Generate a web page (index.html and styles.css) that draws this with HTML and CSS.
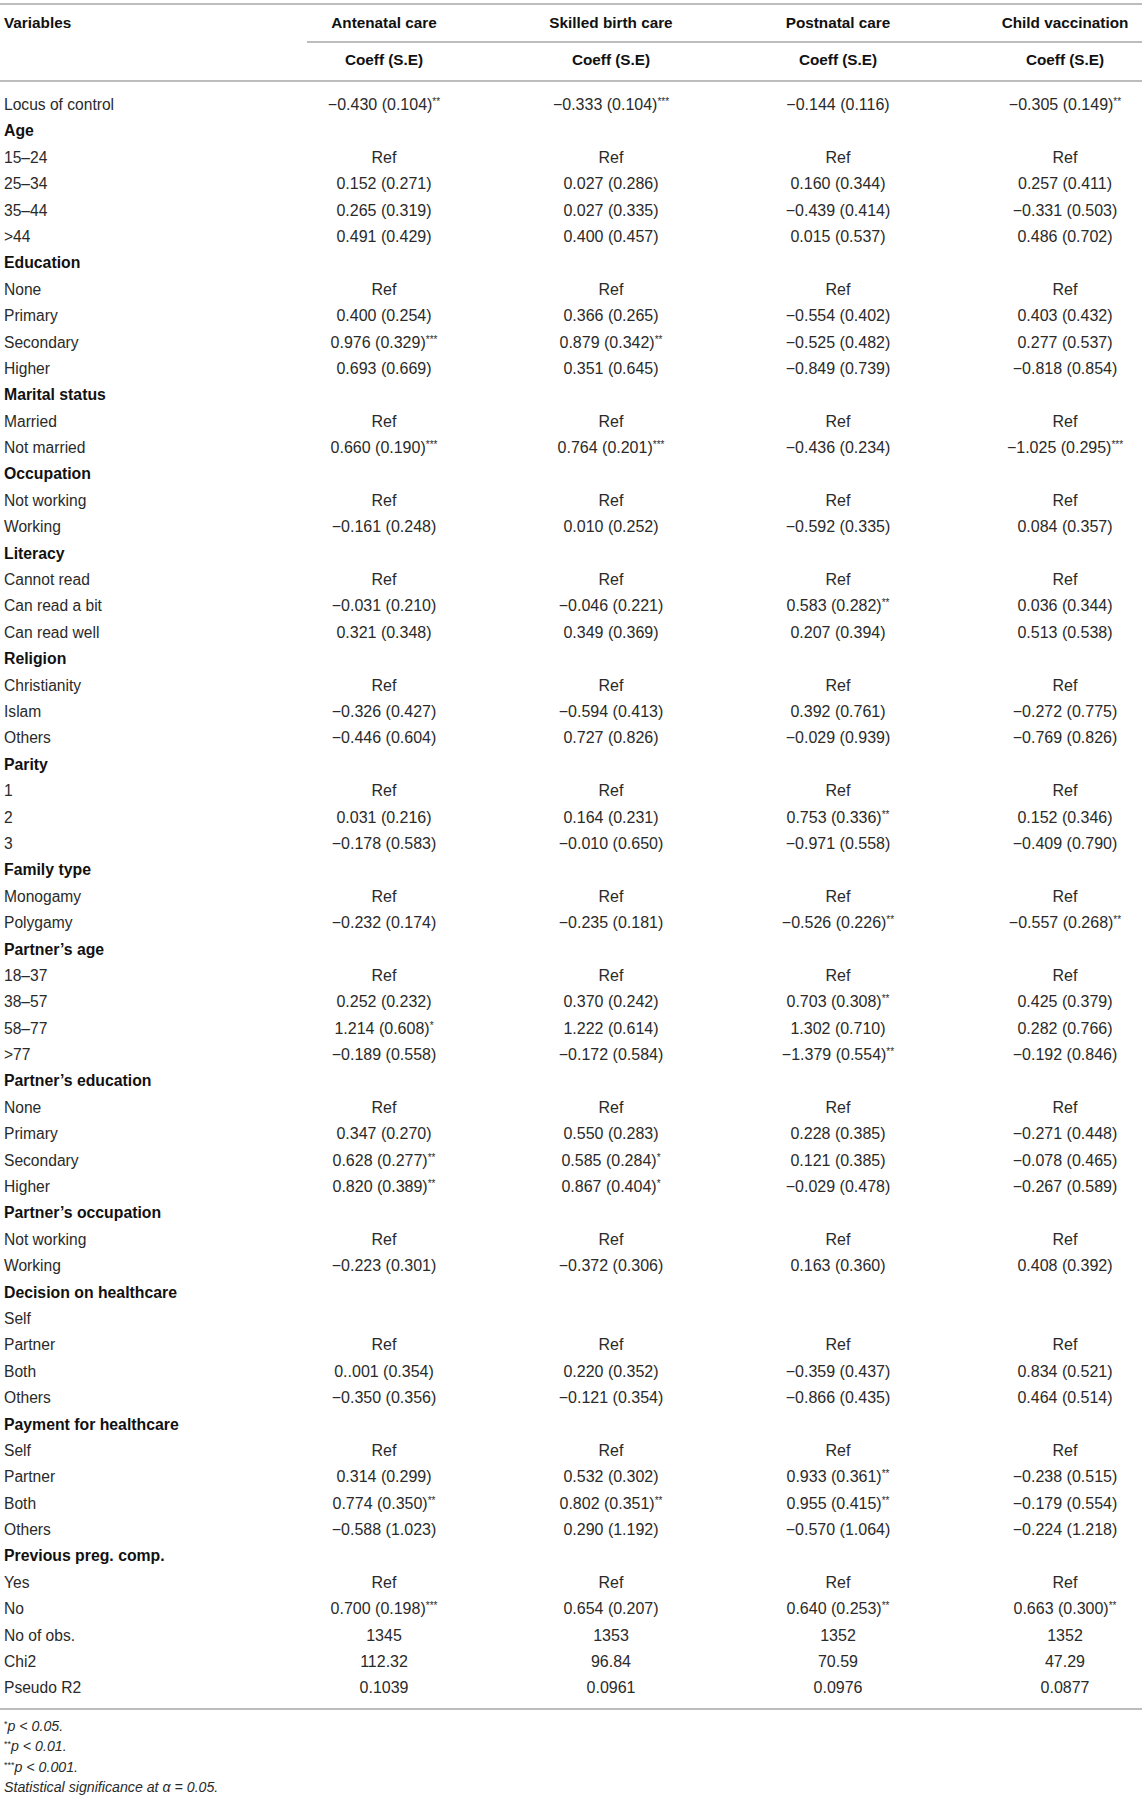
FILE: index.html
```html
<!DOCTYPE html>
<html>
<head>
    <meta name="viewport" content="width=device-width, initial-scale=1.0">
    <link rel="stylesheet" href="styles.css">
</head>
<body>

    <div class="tabla">
        <div class="cab">
            <div class="fila cab1">
                <div class="var">Variables</div>
                <div class="c">Antenatal care</div>
                <div class="c">Skilled birth care</div>
                <div class="c">Postnatal care</div>
                <div class="c">Child vaccination</div>
            </div>
            <div class="regla"></div>
            <div class="fila cab2">
                <div class="var"></div>
                <div class="c">Coeff (S.E)</div>
                <div class="c">Coeff (S.E)</div>
                <div class="c">Coeff (S.E)</div>
                <div class="c">Coeff (S.E)</div>
            </div>
        </div>

        <div class="cuerpo">
            <div class="fila"><div class="var">Locus of control</div><div class="c">&minus;0.430 (0.104)<sup>**</sup></div><div class="c">&minus;0.333 (0.104)<sup>***</sup></div><div class="c">&minus;0.144 (0.116)</div><div class="c">&minus;0.305 (0.149)<sup>**</sup></div></div>

            <div class="fila sec"><div class="var">Age</div></div>
            <div class="fila"><div class="var">15–24</div><div class="c">Ref</div><div class="c">Ref</div><div class="c">Ref</div><div class="c">Ref</div></div>
            <div class="fila"><div class="var">25–34</div><div class="c">0.152 (0.271)</div><div class="c">0.027 (0.286)</div><div class="c">0.160 (0.344)</div><div class="c">0.257 (0.411)</div></div>
            <div class="fila"><div class="var">35–44</div><div class="c">0.265 (0.319)</div><div class="c">0.027 (0.335)</div><div class="c">&minus;0.439 (0.414)</div><div class="c">&minus;0.331 (0.503)</div></div>
            <div class="fila"><div class="var">&gt;44</div><div class="c">0.491 (0.429)</div><div class="c">0.400 (0.457)</div><div class="c">0.015 (0.537)</div><div class="c">0.486 (0.702)</div></div>

            <div class="fila sec"><div class="var">Education</div></div>
            <div class="fila"><div class="var">None</div><div class="c">Ref</div><div class="c">Ref</div><div class="c">Ref</div><div class="c">Ref</div></div>
            <div class="fila"><div class="var">Primary</div><div class="c">0.400 (0.254)</div><div class="c">0.366 (0.265)</div><div class="c">&minus;0.554 (0.402)</div><div class="c">0.403 (0.432)</div></div>
            <div class="fila"><div class="var">Secondary</div><div class="c">0.976 (0.329)<sup>***</sup></div><div class="c">0.879 (0.342)<sup>**</sup></div><div class="c">&minus;0.525 (0.482)</div><div class="c">0.277 (0.537)</div></div>
            <div class="fila"><div class="var">Higher</div><div class="c">0.693 (0.669)</div><div class="c">0.351 (0.645)</div><div class="c">&minus;0.849 (0.739)</div><div class="c">&minus;0.818 (0.854)</div></div>

            <div class="fila sec"><div class="var">Marital status</div></div>
            <div class="fila"><div class="var">Married</div><div class="c">Ref</div><div class="c">Ref</div><div class="c">Ref</div><div class="c">Ref</div></div>
            <div class="fila"><div class="var">Not married</div><div class="c">0.660 (0.190)<sup>***</sup></div><div class="c">0.764 (0.201)<sup>***</sup></div><div class="c">&minus;0.436 (0.234)</div><div class="c">&minus;1.025 (0.295)<sup>***</sup></div></div>

            <div class="fila sec"><div class="var">Occupation</div></div>
            <div class="fila"><div class="var">Not working</div><div class="c">Ref</div><div class="c">Ref</div><div class="c">Ref</div><div class="c">Ref</div></div>
            <div class="fila"><div class="var">Working</div><div class="c">&minus;0.161 (0.248)</div><div class="c">0.010 (0.252)</div><div class="c">&minus;0.592 (0.335)</div><div class="c">0.084 (0.357)</div></div>

            <div class="fila sec"><div class="var">Literacy</div></div>
            <div class="fila"><div class="var">Cannot read</div><div class="c">Ref</div><div class="c">Ref</div><div class="c">Ref</div><div class="c">Ref</div></div>
            <div class="fila"><div class="var">Can read a bit</div><div class="c">&minus;0.031 (0.210)</div><div class="c">&minus;0.046 (0.221)</div><div class="c">0.583 (0.282)<sup>**</sup></div><div class="c">0.036 (0.344)</div></div>
            <div class="fila"><div class="var">Can read well</div><div class="c">0.321 (0.348)</div><div class="c">0.349 (0.369)</div><div class="c">0.207 (0.394)</div><div class="c">0.513 (0.538)</div></div>

            <div class="fila sec"><div class="var">Religion</div></div>
            <div class="fila"><div class="var">Christianity</div><div class="c">Ref</div><div class="c">Ref</div><div class="c">Ref</div><div class="c">Ref</div></div>
            <div class="fila"><div class="var">Islam</div><div class="c">&minus;0.326 (0.427)</div><div class="c">&minus;0.594 (0.413)</div><div class="c">0.392 (0.761)</div><div class="c">&minus;0.272 (0.775)</div></div>
            <div class="fila"><div class="var">Others</div><div class="c">&minus;0.446 (0.604)</div><div class="c">0.727 (0.826)</div><div class="c">&minus;0.029 (0.939)</div><div class="c">&minus;0.769 (0.826)</div></div>

            <div class="fila sec"><div class="var">Parity</div></div>
            <div class="fila"><div class="var">1</div><div class="c">Ref</div><div class="c">Ref</div><div class="c">Ref</div><div class="c">Ref</div></div>
            <div class="fila"><div class="var">2</div><div class="c">0.031 (0.216)</div><div class="c">0.164 (0.231)</div><div class="c">0.753 (0.336)<sup>**</sup></div><div class="c">0.152 (0.346)</div></div>
            <div class="fila"><div class="var">3</div><div class="c">&minus;0.178 (0.583)</div><div class="c">&minus;0.010 (0.650)</div><div class="c">&minus;0.971 (0.558)</div><div class="c">&minus;0.409 (0.790)</div></div>

            <div class="fila sec"><div class="var">Family type</div></div>
            <div class="fila"><div class="var">Monogamy</div><div class="c">Ref</div><div class="c">Ref</div><div class="c">Ref</div><div class="c">Ref</div></div>
            <div class="fila"><div class="var">Polygamy</div><div class="c">&minus;0.232 (0.174)</div><div class="c">&minus;0.235 (0.181)</div><div class="c">&minus;0.526 (0.226)<sup>**</sup></div><div class="c">&minus;0.557 (0.268)<sup>**</sup></div></div>

            <div class="fila sec"><div class="var">Partner’s age</div></div>
            <div class="fila"><div class="var">18–37</div><div class="c">Ref</div><div class="c">Ref</div><div class="c">Ref</div><div class="c">Ref</div></div>
            <div class="fila"><div class="var">38–57</div><div class="c">0.252 (0.232)</div><div class="c">0.370 (0.242)</div><div class="c">0.703 (0.308)<sup>**</sup></div><div class="c">0.425 (0.379)</div></div>
            <div class="fila"><div class="var">58–77</div><div class="c">1.214 (0.608)<sup>*</sup></div><div class="c">1.222 (0.614)</div><div class="c">1.302 (0.710)</div><div class="c">0.282 (0.766)</div></div>
            <div class="fila"><div class="var">&gt;77</div><div class="c">&minus;0.189 (0.558)</div><div class="c">&minus;0.172 (0.584)</div><div class="c">&minus;1.379 (0.554)<sup>**</sup></div><div class="c">&minus;0.192 (0.846)</div></div>

            <div class="fila sec"><div class="var">Partner’s education</div></div>
            <div class="fila"><div class="var">None</div><div class="c">Ref</div><div class="c">Ref</div><div class="c">Ref</div><div class="c">Ref</div></div>
            <div class="fila"><div class="var">Primary</div><div class="c">0.347 (0.270)</div><div class="c">0.550 (0.283)</div><div class="c">0.228 (0.385)</div><div class="c">&minus;0.271 (0.448)</div></div>
            <div class="fila"><div class="var">Secondary</div><div class="c">0.628 (0.277)<sup>**</sup></div><div class="c">0.585 (0.284)<sup>*</sup></div><div class="c">0.121 (0.385)</div><div class="c">&minus;0.078 (0.465)</div></div>
            <div class="fila"><div class="var">Higher</div><div class="c">0.820 (0.389)<sup>**</sup></div><div class="c">0.867 (0.404)<sup>*</sup></div><div class="c">&minus;0.029 (0.478)</div><div class="c">&minus;0.267 (0.589)</div></div>

            <div class="fila sec"><div class="var">Partner’s occupation</div></div>
            <div class="fila"><div class="var">Not working</div><div class="c">Ref</div><div class="c">Ref</div><div class="c">Ref</div><div class="c">Ref</div></div>
            <div class="fila"><div class="var">Working</div><div class="c">&minus;0.223 (0.301)</div><div class="c">&minus;0.372 (0.306)</div><div class="c">0.163 (0.360)</div><div class="c">0.408 (0.392)</div></div>

            <div class="fila sec"><div class="var">Decision on healthcare</div></div>
            <div class="fila"><div class="var">Self</div></div>
            <div class="fila"><div class="var">Partner</div><div class="c">Ref</div><div class="c">Ref</div><div class="c">Ref</div><div class="c">Ref</div></div>
            <div class="fila"><div class="var">Both</div><div class="c">0..001 (0.354)</div><div class="c">0.220 (0.352)</div><div class="c">&minus;0.359 (0.437)</div><div class="c">0.834 (0.521)</div></div>
            <div class="fila"><div class="var">Others</div><div class="c">&minus;0.350 (0.356)</div><div class="c">&minus;0.121 (0.354)</div><div class="c">&minus;0.866 (0.435)</div><div class="c">0.464 (0.514)</div></div>

            <div class="fila sec"><div class="var">Payment for healthcare</div></div>
            <div class="fila"><div class="var">Self</div><div class="c">Ref</div><div class="c">Ref</div><div class="c">Ref</div><div class="c">Ref</div></div>
            <div class="fila"><div class="var">Partner</div><div class="c">0.314 (0.299)</div><div class="c">0.532 (0.302)</div><div class="c">0.933 (0.361)<sup>**</sup></div><div class="c">&minus;0.238 (0.515)</div></div>
            <div class="fila"><div class="var">Both</div><div class="c">0.774 (0.350)<sup>**</sup></div><div class="c">0.802 (0.351)<sup>**</sup></div><div class="c">0.955 (0.415)<sup>**</sup></div><div class="c">&minus;0.179 (0.554)</div></div>
            <div class="fila"><div class="var">Others</div><div class="c">&minus;0.588 (1.023)</div><div class="c">0.290 (1.192)</div><div class="c">&minus;0.570 (1.064)</div><div class="c">&minus;0.224 (1.218)</div></div>

            <div class="fila sec"><div class="var">Previous preg. comp.</div></div>
            <div class="fila"><div class="var">Yes</div><div class="c">Ref</div><div class="c">Ref</div><div class="c">Ref</div><div class="c">Ref</div></div>
            <div class="fila"><div class="var">No</div><div class="c">0.700 (0.198)<sup>***</sup></div><div class="c">0.654 (0.207)</div><div class="c">0.640 (0.253)<sup>**</sup></div><div class="c">0.663 (0.300)<sup>**</sup></div></div>
            <div class="fila"><div class="var">No of obs.</div><div class="c">1345</div><div class="c">1353</div><div class="c">1352</div><div class="c">1352</div></div>
            <div class="fila"><div class="var">Chi2</div><div class="c">112.32</div><div class="c">96.84</div><div class="c">70.59</div><div class="c">47.29</div></div>
            <div class="fila"><div class="var">Pseudo R2</div><div class="c">0.1039</div><div class="c">0.0961</div><div class="c">0.0976</div><div class="c">0.0877</div></div>
        </div>
    </div>

    <div class="notas">
        <p><sup>*</sup>p &lt; 0.05.</p>
        <p><sup>**</sup>p &lt; 0.01.</p>
        <p><sup>***</sup>p &lt; 0.001.</p>
        <p>Statistical significance at α = 0.05.</p>
    </div>

</body>
</html>
```

FILE: styles.css
```css
        body {
            margin: 0;
            padding-top: 3px;
            font-family: "Liberation Sans", Arial, sans-serif;
            color: #2a2a2a;
            background-color: white;
        }

        .tabla {
            width: 1142px;
            border-top: 2px solid #bdbdbd;
            border-bottom: 2px solid #bdbdbd;
        }

        .cab {
            border-bottom: 2px solid #bdbdbd;
            font-weight: bold;
            color: #111;
        }

        .fila {
            display: grid;
            grid-template-columns: 234px repeat(4, 227px);
            height: 26.4px;
            line-height: 26.4px;
            white-space: nowrap;
        }

        .cab1 {
            height: 36px;
            line-height: 36px;
        }

        .cab2 {
            height: 37px;
            line-height: 34px;
        }

        .regla {
            margin-left: 307px;
            height: 2px;
            background-color: #bdbdbd;
        }

        .var {
            padding-left: 4px;
            font-size: 15.6px;
        }

        .c {
            padding-left: 73px;
            text-align: center;
            font-size: 16px;
        }

        .cab .var,
        .cab .c {
            font-size: 15.3px;
        }

        .cuerpo {
            padding: 10px 0 6px 0;
        }

        .sec .var {
            font-weight: bold;
            font-size: 15.8px;
            color: #111;
        }

        sup {
            font-size: 10px;
            line-height: 0;
            vertical-align: 5px;
        }

        .notas {
            padding: 6px 0 0 4px;
            font-size: 14.2px;
            font-style: italic;
            line-height: 20.5px;
            color: #2a2a2a;
        }

        .notas p {
            margin: 0;
        }

        .notas sup {
            font-style: normal;
            font-size: 9px;
            vertical-align: 4px;
        }
```
